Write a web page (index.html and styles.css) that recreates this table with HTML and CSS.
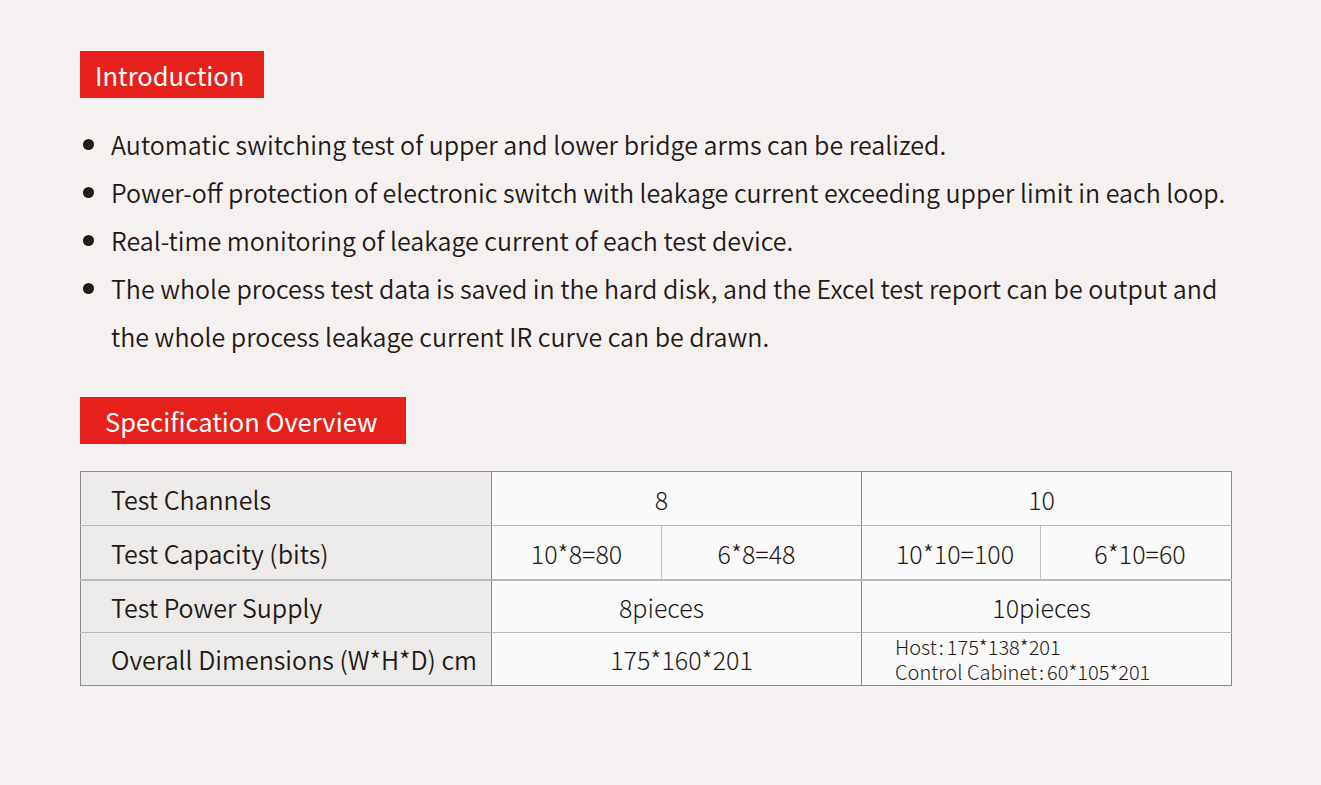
FILE: index.html
```html
<!DOCTYPE html>
<html lang="en">
<head>
<meta charset="utf-8">
<title>Introduction</title>
<link rel="stylesheet" href="styles.css">
</head>
<body>
<div class="page">
  <h2 class="tag tag-intro">Introduction</h2>
  <ul class="bullets">
    <li>Automatic switching test of upper and lower bridge arms can be realized.</li>
    <li>Power-off protection of electronic switch with leakage current exceeding upper limit in each loop.</li>
    <li>Real-time monitoring of leakage current of each test device.</li>
    <li>The whole process test data is saved in the hard disk, and the Excel test report can be output and the whole process leakage current IR curve can be drawn.</li>
  </ul>
  <h2 class="tag tag-spec">Specification Overview</h2>
  <table class="spec">
    <colgroup>
      <col class="c-label">
      <col class="c-a"><col class="c-b"><col class="c-c"><col class="c-d">
    </colgroup>
    <tr>
      <th>Test Channels</th>
      <td colspan="2" class="left-group">8</td>
      <td colspan="2" class="right-group">10</td>
    </tr>
    <tr>
      <th>Test Capacity (bits)</th>
      <td class="sub">10*8=80</td>
      <td class="sub-b">6*8=48</td>
      <td class="sub sub-c">10*10=100</td>
      <td class="sub-d">6*10=60</td>
    </tr>
    <tr class="r3">
      <th>Test Power Supply</th>
      <td colspan="2" class="left-group">8pieces</td>
      <td colspan="2" class="right-group">10pieces</td>
    </tr>
    <tr class="r4">
      <th>Overall Dimensions (W*H*D) cm</th>
      <td colspan="2" class="dims">175*160*201</td>
      <td colspan="2" class="multi"><div class="line">Host<span class="colon">:</span>175*138*201</div><div class="line">Control Cabinet<span class="colon">:</span>60*105*201</div></td>
    </tr>
  </table>
</div>
</body>
</html>
```

FILE: styles.css
```css
html, body {
  margin: 0;
  padding: 0;
  background: #f5f1f0;
}
body {
  font-family: "Noto Sans CJK SC", "Noto Sans", sans-serif;
  color: #231815;
  width: 1321px;
  height: 785px;
  overflow: hidden;
}
.page {
  padding: 51px 80px 0 80px;
}
.tag {
  display: inline-block;
  margin: 0;
  background: #e6201a;
  color: #fff;
  font-size: 25.5px;
  font-weight: 400;
  line-height: 47px;
  height: 47px;
}
.tag-intro { padding: 0 20px 0 15px; }
.tag-spec { padding: 0 29px 0 25px; margin-top: 37px; }
.bullets {
  list-style: none;
  margin: 22px 0 0 0;
  padding: 0;
  font-size: 25px;
  font-weight: 350;
  line-height: 48px;
}
.bullets li {
  position: relative;
  padding-left: 31px;
}
.bullets li::before {
  content: "";
  position: absolute;
  left: 3px;
  top: 19px;
  width: 11px;
  height: 11px;
  border-radius: 50%;
  background: #231815;
}
.spec {
  margin-top: 27px;
  width: 1151px;
  border-collapse: collapse;
  table-layout: fixed;
  border: 1px solid #8a8a8a;
}
.c-label { width: 411px; }
.c-a { width: 170px; }
.c-b { width: 200px; }
.c-c { width: 179px; }
.c-d { width: 191px; }
.spec th, .spec td {
  height: 53px;
  padding: 0;
  border: 1px solid #8a8a8a;
  border-top: 1px solid #b8b8b8;
  border-bottom: 1px solid #b8b8b8;
  font-size: 25px;
  font-weight: 300;
  line-height: 30px;
}
.spec tr.r3 th, .spec tr.r3 td { height: 51px; }
.spec tr.r4 th, .spec tr.r4 td { height: 52px; }
.spec tr:first-child th, .spec tr:first-child td { border-top-color: #8a8a8a; }
.spec tr:last-child th, .spec tr:last-child td { border-bottom-color: #8a8a8a; }
.spec tr.r3 th, .spec tr.r3 td { border-top: 2px solid #b8b8b8; }
.spec th {
  background: #ecebe9;
  text-align: left;
  padding-left: 30px;
  font-weight: 350;
}
.spec td {
  background: #fafafa;
  text-align: center;
}
.spec td.sub { border-right: 1px solid #c4c4c4; }
.spec td.left-group { padding-right: 30px; }
.spec td.right-group { padding-right: 10px; }
.spec td.sub-b { padding-right: 10px; }
.spec td.sub-c { padding-left: 8px; }
.spec td.sub-d { padding-left: 8px; }
.spec td.dims { padding-left: 10px; }
.spec td.multi {
  text-align: left;
  padding-left: 33px;
}
.multi .line {
  font-size: 20px;
  line-height: 25px;
}
.colon {
  margin: 0 3px 0 2px;
}
```
